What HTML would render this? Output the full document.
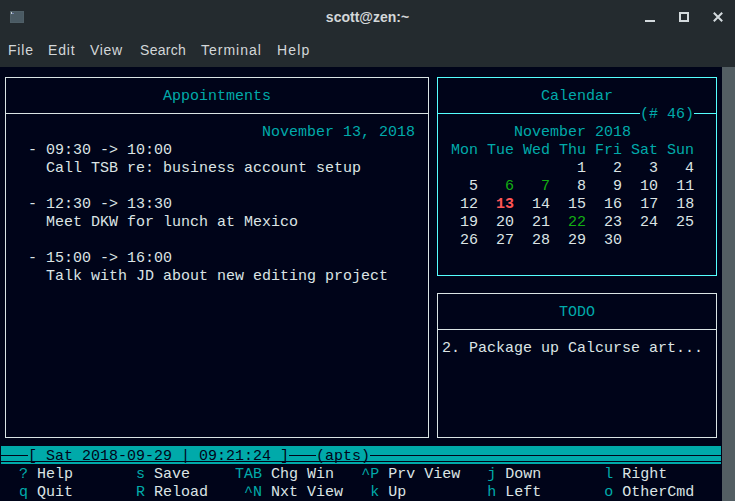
<!DOCTYPE html>
<html><head><meta charset="utf-8">
<style>
*{margin:0;padding:0;box-sizing:border-box}
html,body{width:735px;height:501px;overflow:hidden;background:#242b2f}
#hdr{position:absolute;left:0;top:0;width:735px;height:67px;background:#242b2f;font-family:"Liberation Sans",sans-serif;color:#d3d7d9}
#title{position:absolute;left:0;top:7px;width:735px;text-align:center;font-weight:bold;font-size:14px;line-height:20px}
.menu{position:absolute;top:40px;font-size:14px;line-height:20px}
#term{position:absolute;left:0;top:67px;width:722px;height:434px;background:#000419}
#sb{position:absolute;left:722px;top:67px;width:13px;height:434px;background:#535e63}
#rows{position:absolute;left:0;top:2px}
.r{position:absolute;left:1px;height:18px;font-family:"Liberation Mono",monospace;font-size:15px;line-height:18px;white-space:pre;color:#dce4e5}
.box{position:absolute;border:1px solid #dae4e4}
.hl{position:absolute;height:1px;background:#dae4e4}
.cb{border-color:#55ffff}
.cbg{background:#55ffff}
.c{color:#00aaaa}
.g{color:#13af13}
.rd{color:#ff5555;font-weight:bold}
.s{color:#000419}
#status{position:absolute;left:1px;top:446px;width:720px;height:18px;background:#00aaaa}
.sl{position:absolute;height:1px;background:#000419}
</style></head><body>
<div id="hdr">
  <div id="title">scott@zen:~</div>
  <div class="menu" style="left:8px;letter-spacing:0.8px">File</div>
  <div class="menu" style="left:48px;letter-spacing:0.85px">Edit</div>
  <div class="menu" style="left:90px;letter-spacing:0.65px">View</div>
  <div class="menu" style="left:140px;letter-spacing:0.3px">Search</div>
  <div class="menu" style="left:201px;letter-spacing:1px">Terminal</div>
  <div class="menu" style="left:277px;letter-spacing:1.15px">Help</div>
  <div style="position:absolute;left:10px;top:11px;width:14px;height:12px;background:#4a5a63;border:1px solid #4f5f67"></div><div style="position:absolute;left:11px;top:12px;width:1px;height:2px;background:#c8d0d4"></div><div style="position:absolute;left:12px;top:13px;width:2px;height:1px;background:#7080a8"></div>
  <div style="position:absolute;left:645px;top:20px;width:10px;height:2px;background:#d3dadd"></div>
  <div style="position:absolute;left:679px;top:12px;width:10px;height:10px;border:2px solid #d3dadd"></div>
  <svg style="position:absolute;left:712px;top:11px" width="12" height="12" viewBox="0 0 12 12"><path d="M1.8 1.8L10.2 10.2M10.2 1.8L1.8 10.2" stroke="#d3dadd" stroke-width="2"/></svg>
</div>
<div id="term"></div>
<div id="sb"></div>

<div class="box" style="left:5px;top:77px;width:424px;height:361px"></div>
<div class="hl" style="left:5px;top:113px;width:424px"></div>
<div class="box cb" style="left:437px;top:77px;width:280px;height:199px"></div>
<div class="hl cbg" style="left:437px;top:113px;width:203px"></div>
<div class="hl cbg" style="left:694px;top:113px;width:23px"></div>
<div class="box" style="left:437px;top:293px;width:280px;height:145px"></div>
<div class="hl" style="left:437px;top:329px;width:280px"></div>

<div id="status"></div>
<div class="sl" style="left:1px;top:455px;width:27px"></div>
<div class="sl" style="left:289px;top:455px;width:27px"></div>
<div class="sl" style="left:370px;top:455px;width:351px"></div>
<div class="sl" style="left:1px;top:461px;width:720px"></div>
<div id="rows">
<div class="r" style="top:86px">                  <span class="c">Appointments                              Calendar</span></div>
<div class="r" style="top:104px">                                                                       <span class="c">(# 46)</span></div>
<div class="r" style="top:122px">                             <span class="c">November 13, 2018           November 2018</span></div>
<div class="r" style="top:140px">   - 09:30 -&gt; 10:00                               <span class="c">Mon Tue Wed Thu Fri Sat Sun</span></div>
<div class="r" style="top:158px">     Call TSB re: business account setup                        1   2   3   4</div>
<div class="r" style="top:176px">                                                    5   <span class="g">6   7   </span>8   9  10  11</div>
<div class="r" style="top:194px">   - 12:30 -&gt; 13:30                                12  <span class="rd">13  </span>14  15  16  17  18</div>
<div class="r" style="top:212px">     Meet DKW for lunch at Mexico                  19  20  21  <span class="g">22  </span>23  24  25</div>
<div class="r" style="top:230px">                                                   26  27  28  29  30</div>
<div class="r" style="top:248px">   - 15:00 -&gt; 16:00</div>
<div class="r" style="top:266px">     Talk with JD about new editing project</div>
<div class="r" style="top:302px">                                                              <span class="c">TODO</span></div>
<div class="r" style="top:338px">                                                 2. Package up Calcurse art...</div>
<div class="r" style="top:446px">   <span class="s">[ Sat 2018-09-29 | 09:21:24 ]   (apts)</span></div>
<div class="r" style="top:464px">  <span class="c">? </span>Help       <span class="c">s </span>Save     <span class="c">TAB </span>Chg Win   <span class="c">^P </span>Prv View   <span class="c">j </span>Down       <span class="c">l </span>Right</div>
<div class="r" style="top:482px">  <span class="c">q </span>Quit       <span class="c">R </span>Reload    <span class="c">^N </span>Nxt View   <span class="c">k </span>Up         <span class="c">h </span>Left       <span class="c">o </span>OtherCmd</div>
</div>
</body></html>
